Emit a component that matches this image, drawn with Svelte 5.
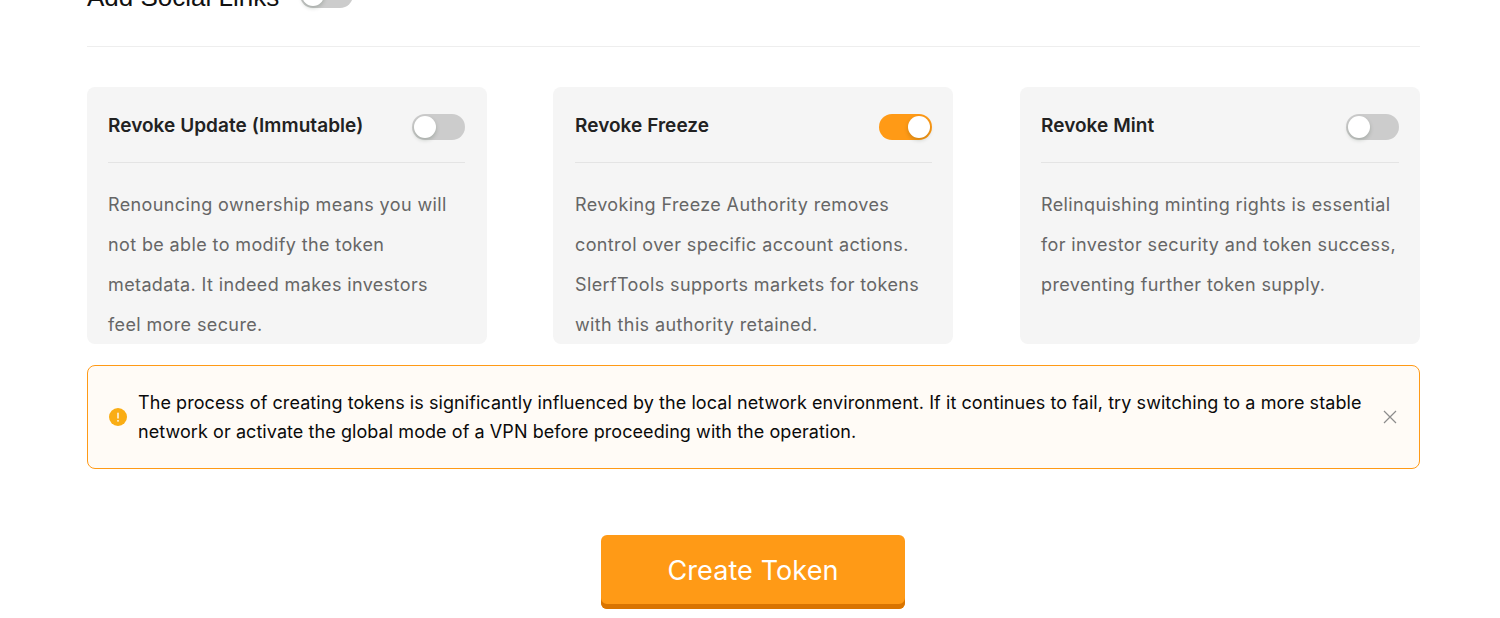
<script lang="ts">
  let cards = $state([
    {
      title: "Revoke Update (Immutable)",
      on: false,
      lines: ["Renouncing ownership means you will", "not be able to modify the token", "metadata. It indeed makes investors", "feel more secure."]
    },
    {
      title: "Revoke Freeze",
      on: true,
      lines: ["Revoking Freeze Authority removes", "control over specific account actions.", "SlerfTools supports markets for tokens", "with this authority retained."]
    },
    {
      title: "Revoke Mint",
      on: false,
      lines: ["Relinquishing minting rights is essential", "for investor security and token success,", "preventing further token supply."]
    }
  ]);
  let social = $state(false);
  let showAlert = $state(true);
</script>

<div class="page">
  <div class="social">
    <span class="social-label">Add Social Links</span>
    <button class="switch" class:on={social} aria-label="Add Social Links" onclick={() => (social = !social)}><span class="knob"></span></button>
  </div>

  <div class="cards">
    {#each cards as card}
      <div class="card">
        <div class="card-head">
          <span class="card-title">{card.title}</span>
          <button class="switch" class:on={card.on} aria-label={card.title} onclick={() => (card.on = !card.on)}><span class="knob"></span></button>
        </div>
        <div class="card-body">
          {#each card.lines as line}
            <div>{line}</div>
          {/each}
        </div>
      </div>
    {/each}
  </div>

  {#if showAlert}
    <div class="alert">
      <svg class="alert-icon" width="18" height="18" viewBox="0 0 18 18" aria-hidden="true">
        <circle cx="9" cy="9" r="9" fill="#faad14" />
        <rect x="8.3" y="4.4" width="1.4" height="6.4" rx="0.7" fill="#fff" />
        <circle cx="9" cy="12.8" r="0.9" fill="#fff" />
      </svg>
      <div class="alert-text">
        <div>The process of creating tokens is significantly influenced by the local network environment. If it continues to fail, try switching to a more stable</div>
        <div>network or activate the global mode of a VPN before proceeding with the operation.</div>
      </div>
      <button class="close" aria-label="Close" onclick={() => (showAlert = false)}>
        <svg width="14" height="14" viewBox="0 0 14 14" aria-hidden="true">
          <path d="M1 1 L13 13 M13 1 L1 13" stroke="#8c8c8c" stroke-width="1.2" fill="none" />
        </svg>
      </button>
    </div>
  {/if}

  <div class="actions">
    <button class="create">Create Token</button>
  </div>
</div>

<style>
  :global(body) {
    margin: 0;
    background: #fff;
    overflow: hidden;
  }

  .page {
    box-sizing: border-box;
    width: 1500px;
    height: 618px;
    padding: 0 80px 0 87px;
    overflow: hidden;
    font-family: Inter, "Noto Sans", sans-serif;
  }

  .social {
    display: flex;
    align-items: flex-start;
    gap: 21px;
    height: 26px;
    margin-top: -18px;
    padding-bottom: 38px;
    border-bottom: 1px solid #eeeeee;
  }

  .social-label {
    font-family: "Liberation Sans", sans-serif;
    font-size: 26px;
    line-height: 30px;
    color: #111;
  }

  .cards {
    display: flex;
    gap: 66px;
    margin-top: 40px;
  }

  .card {
    box-sizing: border-box;
    width: 400px;
    height: 257px;
    padding: 0 22px 0 21px;
    background: #f5f5f5;
    border-radius: 8px;
    overflow: hidden;
  }

  .card:nth-child(2) {
    padding: 0 21px 0 22px;
  }

  .card:last-child {
    margin-left: auto;
    padding: 0 21px;
  }

  .card-head {
    display: flex;
    align-items: center;
    justify-content: space-between;
    box-sizing: border-box;
    height: 76px;
    padding-top: 2px;
    border-bottom: 1px solid #e4e4e4;
  }

  .card-title {
    font-size: 19px;
    font-weight: 600;
    letter-spacing: 0.05px;
    color: #222;
  }

  .card-head .switch {
    margin-top: 2px;
  }

  .card-body {
    padding-top: 22px;
    font-size: 18px;
    letter-spacing: 0.38px;
    line-height: 40px;
    color: #666;
    white-space: nowrap;
  }

  .switch {
    position: relative;
    flex: none;
    width: 53px;
    height: 26px;
    padding: 0;
    border: 0;
    border-radius: 13px;
    background: #ccc;
    cursor: pointer;
  }

  .switch.on {
    background: #ff9a16;
  }

  .knob {
    position: absolute;
    top: 2px;
    left: 2px;
    width: 22px;
    height: 22px;
    border-radius: 50%;
    background: #fff;
    box-shadow: 0 2px 4px rgba(0, 35, 11, 0.2);
  }

  .switch.on .knob {
    left: 29px;
  }

  .alert {
    box-sizing: border-box;
    display: flex;
    align-items: center;
    height: 104px;
    margin-top: 21px;
    padding: 0 22px 0 21px;
    background: #fffbf6;
    border: 1px solid #ff9a16;
    border-radius: 8px;
  }

  .alert-icon {
    flex: none;
    margin-right: 11px;
  }

  .alert-text {
    flex: 1;
    font-size: 18px;
    letter-spacing: 0.07px;
    line-height: 29px;
    color: #0a0a0a;
    white-space: nowrap;
  }

  .close {
    display: flex;
    padding: 0;
    border: 0;
    background: none;
    cursor: pointer;
  }

  .actions {
    display: flex;
    justify-content: center;
    margin-top: 66px;
    padding-right: 1px;
  }

  .create {
    width: 304px;
    height: 74px;
    padding: 0 0 3px;
    border: 0;
    border-radius: 6px;
    background: #ff9a16;
    box-shadow: inset 0 -5px 0 #d97400;
    color: #fff;
    font-family: Inter, "Noto Sans", sans-serif;
    font-size: 27px;
    letter-spacing: 0.1px;
    cursor: pointer;
  }
</style>
